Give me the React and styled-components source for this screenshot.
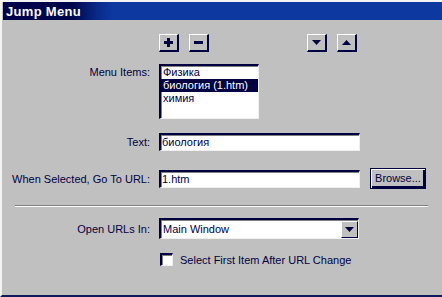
import React from "react";
import styled, { createGlobalStyle } from "styled-components";

const Global = createGlobalStyle`
  html, body {
    margin: 0;
    padding: 0;
    background: #c0c0c0;
  }
  body {
    font-family: "Liberation Sans", Arial, sans-serif;
    font-size: 11px;
    color: #000040;
  }
`;

const Dialog = styled.div`
  width: 442px;
  height: 297px;
  box-sizing: border-box;
  border-left: 2px solid #f4f4f4;
  border-top: 2px solid #f4f4f4;
  border-bottom: 2px solid #101a5a;
  background: #c0c0c0;
  display: flex;
  flex-direction: column;
`;

const TitleBar = styled.div`
  height: 18px;
  margin-left: 1px;
  padding-left: 3px;
  display: flex;
  align-items: center;
  background: linear-gradient(90deg, #00004a 0px, #00084c 70px, #0a2a8a 95px, #0c38a0 110px, #0c38a0 100%);
  color: #ffffff;
  font-weight: bold;
  font-size: 13px;
  letter-spacing: 0.3px;
`;

const Body = styled.div`
  flex: 1;
  padding: 14px 0 0 0;
  display: flex;
  flex-direction: column;
`;

const Toolbar = styled.div`
  display: flex;
  padding-left: 157px;
  height: 18px;
`;

const Group = styled.div`
  display: flex;
  gap: 10px;
  margin-right: ${(p) => p.$after || 0}px;
`;

const ToolButton = styled.div`
  width: 20px;
  height: 18px;
  box-sizing: border-box;
  background: #c0c0c0;
  border-top: 1px solid #ffffff;
  border-left: 1px solid #ffffff;
  border-right: 2px solid #000040;
  border-bottom: 2px solid #000040;
  display: flex;
  align-items: center;
  justify-content: center;
`;

const Row = styled.div`
  display: grid;
  grid-template-columns: 148px max-content max-content;
  justify-content: start;
  align-items: ${(p) => p.$align || "center"};
  column-gap: 9px;
  margin-top: ${(p) => p.$top || 0}px;
`;

const Label = styled.div`
  text-align: right;
  white-space: nowrap;
  padding-top: ${(p) => p.$pad || 0}px;
`;

const Sunken = styled.div`
  box-sizing: border-box;
  background: #ffffff;
  border-top: 2px solid #000040;
  border-left: 2px solid #000040;
  border-right: 1px solid #f0f0f0;
  border-bottom: 1px solid #f0f0f0;
  box-shadow: inset 1px 1px 0 #808080;
`;

const ListBox = styled(Sunken)`
  width: 100px;
  height: 55px;
  display: flex;
  flex-direction: column;
  overflow: hidden;
`;

const ListItem = styled.div`
  height: 13px;
  line-height: 13px;
  padding-left: 2px;
  color: ${(p) => (p.$selected ? "#ffffff" : "#000040")};
  background: ${(p) => (p.$selected ? "#000040" : "transparent")};
  white-space: nowrap;
`;

const TextField = styled(Sunken)`
  width: 201px;
  height: 18px;
  padding-left: 1px;
  line-height: 15px;
  color: #000040;
`;

const Browse = styled.div`
  width: 56px;
  height: 21px;
  margin-left: 1px;
  box-sizing: border-box;
  border: 1px solid #000040;
  box-shadow: inset 1px 1px 0 #ffffff, inset -2px -2px 0 #000040;
  display: flex;
  align-items: center;
  justify-content: center;
  padding-bottom: 1px;
`;

const Separator = styled.div`
  margin: 16px 14px 11px 13px;
  height: 0;
  border-top: 1px solid #808080;
  border-bottom: 1px solid #ffffff;
`;

const Select = styled(Sunken)`
  width: 200px;
  height: 21px;
  display: flex;
  align-items: center;
  justify-content: space-between;
  padding-left: 2px;
`;

const DropButton = styled.div`
  width: 17px;
  height: 17px;
  box-sizing: border-box;
  background: #c0c0c0;
  border-top: 1px solid #ffffff;
  border-left: 1px solid #ffffff;
  border-right: 1px solid #000040;
  border-bottom: 1px solid #000040;
  display: flex;
  align-items: center;
  justify-content: center;
`;

const CheckRow = styled.div`
  display: flex;
  align-items: center;
  gap: 7px;
  padding-left: 158px;
  margin-top: 14px;
`;

const CheckBox = styled(Sunken)`
  width: 13px;
  height: 13px;
`;

const Tri = ({ up }) => (
  <svg width="9" height="5" viewBox="0 0 9 5">
    <polygon points={up ? "4.5,0 9,5 0,5" : "0,0 9,0 4.5,5"} fill="#000040" />
  </svg>
);

const Plus = () => (
  <svg width="9" height="9" viewBox="0 0 9 9">
    <rect x="3" y="0" width="3" height="9" fill="#000040" />
    <rect x="0" y="3" width="9" height="3" fill="#000040" />
  </svg>
);

const Minus = () => (
  <svg width="9" height="9" viewBox="0 0 9 9">
    <rect x="0" y="3" width="9" height="3" fill="#000040" />
  </svg>
);

export default function App() {
  return (
    <>
      <Global />
      <Dialog>
        <TitleBar>Jump Menu</TitleBar>
        <Body>
          <Toolbar>
            <Group $after={98}>
              <ToolButton><Plus /></ToolButton>
              <ToolButton><Minus /></ToolButton>
            </Group>
            <Group>
              <ToolButton><Tri /></ToolButton>
              <ToolButton><Tri up /></ToolButton>
            </Group>
          </Toolbar>

          <Row $align="start" $top={12}>
            <Label $pad={2}>Menu Items:</Label>
            <ListBox>
              <ListItem>Физика</ListItem>
              <ListItem $selected>биология (1.htm)</ListItem>
              <ListItem>химия</ListItem>
            </ListBox>
          </Row>

          <Row $top={14}>
            <Label>Text:</Label>
            <TextField>биология</TextField>
          </Row>

          <Row $top={17}>
            <Label>When Selected, Go To URL:</Label>
            <TextField>1.htm</TextField>
            <Browse>Browse...</Browse>
          </Row>

          <Separator />

          <Row>
            <Label>Open URLs In:</Label>
            <Select>
              <span>Main Window</span>
              <DropButton><Tri /></DropButton>
            </Select>
          </Row>

          <CheckRow>
            <CheckBox />
            <span>Select First Item After URL Change</span>
          </CheckRow>
        </Body>
      </Dialog>
    </>
  );
}
